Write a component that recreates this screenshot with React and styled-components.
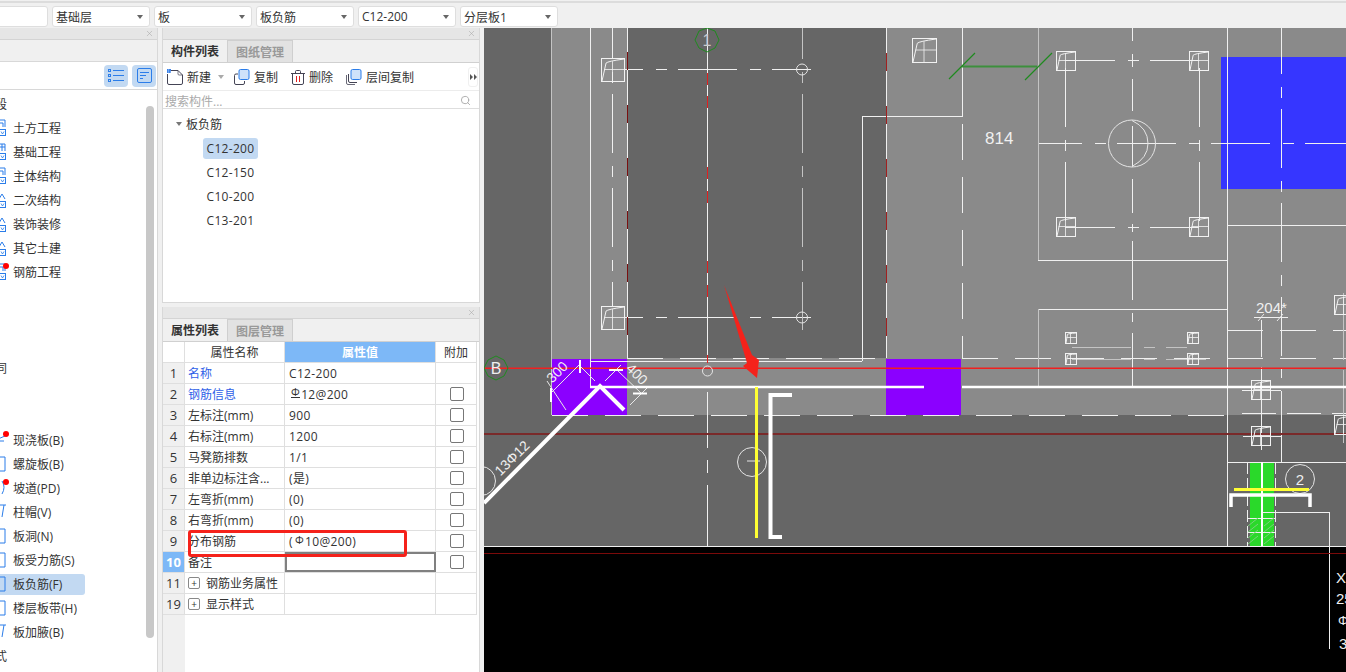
import styled, { createGlobalStyle } from "styled-components";
import { Search, X } from "lucide-react";

const GlobalStyle = createGlobalStyle`
  html, body { margin: 0; padding: 0; overflow: hidden; }
  * { box-sizing: border-box; }
  body { font-family: "Open Sans", "Noto Sans CJK SC", sans-serif; font-size: 12px; color: #333; }
`;

const Page = styled.div`
  width: 1346px;
  height: 672px;
  overflow: hidden;
  display: flex;
  flex-direction: column;
  background: #f0f0f0;
`;

const TopBar = styled.div`
  flex: none;
  display: flex;
  align-items: center;
  gap: 4px;
  margin-left: -50px;
  margin-top: 1px;
  padding-top: 2px;
  border-top: 2px solid #dcdcdc;
  height: 27px;
  width: 1396px;
`;

const SelectBox = styled.div`
  width: 98px;
  height: 21px;
  flex: none;
  display: flex;
  align-items: center;
  justify-content: space-between;
  padding: 0 6px 0 3px;
  background: #fff;
  border: 1px solid #dedede;
  border-radius: 3px;
`;

const Caret = styled.span`
  width: 0;
  height: 0;
  flex: none;
  margin-left: ${(p) => p.$left || "0"};
  border-left: 3px solid transparent;
  border-right: 3px solid transparent;
  border-top: 4px solid ${(p) => p.$color || "#666"};
`;

const Main = styled.div`
  flex: 1;
  min-height: 0;
  display: flex;
  gap: 4px;
`;

const LeftPanel = styled.div`
  width: 158px;
  flex: none;
  display: flex;
  flex-direction: column;
  background: #fff;
  border-right: 1px solid #d8d8d8;
  overflow: hidden;
`;

const PanelHeader = styled.div`
  height: 12px;
  flex: none;
  display: flex;
  align-items: center;
  justify-content: flex-end;
  padding-right: 3px;
  background: #e6e6e6;
  border-bottom: 1px solid #d4d4d4;
  color: #aaa;
`;

const LeftTabStrip = styled.div`
  height: 22px;
  flex: none;
  background: #f0f0f0;
  border-bottom: 1px solid #d8d8d8;
`;

const ViewBar = styled.div`
  height: 28px;
  flex: none;
  display: flex;
  align-items: center;
  justify-content: flex-end;
  gap: 4px;
  padding-right: 1px;
  border-bottom: 1px solid #d8d8d8;
`;

const ViewButton = styled.div`
  width: 24px;
  height: 22px;
  display: flex;
  align-items: center;
  justify-content: center;
  background: #c2d9f2;
  border-radius: 4px;
`;

const TreeArea = styled.div`
  flex: 1;
  min-height: 0;
  display: flex;
  justify-content: space-between;
  padding-top: 2px;
`;

const TreeList = styled.div`
  display: flex;
  flex-direction: column;
`;

const TreeRow = styled.div`
  height: 24px;
  width: 85px;
  flex: none;
  display: flex;
  align-items: center;
`;

const TreeLabel = styled.div`
  position: relative;
  width: 97px;
  height: 21px;
  flex: none;
  display: flex;
  align-items: center;
  gap: 7px;
  white-space: nowrap;
  border-radius: 0 3px 3px 0;
  background: ${(p) => (p.$selected ? "#c2d9f2" : "transparent")};
  margin-left: ${(p) => (p.$clipped ? "-5px" : "-12px")};
`;

const RedDot = styled.span`
  position: absolute;
  left: 15px;
  top: 1px;
  width: 6px;
  height: 6px;
  border-radius: 50%;
  background: #f00;
`;

const ScrollThumb = styled.div`
  width: 8px;
  height: 532px;
  flex: none;
  margin: 14px 3px 0 0;
  background: #c8c8c8;
  border-radius: 4px;
`;

const MiddleColumn = styled.div`
  width: 318px;
  flex: none;
  display: flex;
  flex-direction: column;
  gap: 4px;
`;

const Panel = styled.div`
  flex: ${(p) => (p.$grow ? "1" : "none")};
  height: ${(p) => p.$height || "auto"};
  min-height: 0;
  display: flex;
  flex-direction: column;
  background: #fff;
  border-left: 1px solid #d8d8d8;
  border-right: 1px solid #d8d8d8;
  border-bottom: ${(p) => (p.$grow ? "0" : "1px solid #d8d8d8")};
`;

const TabStrip = styled.div`
  height: 23px;
  flex: none;
  display: flex;
  background: #f0f0f0;
  border-bottom: 1px solid #d0d0d0;
`;

const Tab = styled.div`
  width: 65px;
  display: flex;
  align-items: center;
  justify-content: center;
  font-weight: 700;
  color: ${(p) => (p.$active ? "#333" : "#999")};
  background: ${(p) => (p.$active ? "#f0f0f0" : "#e2e2e2")};
  border-right: 1px solid #cfcfcf;
  border-top: ${(p) => (p.$active ? "0" : "1px solid #cfcfcf")};
`;

const ActionBar = styled.div`
  height: 28px;
  flex: none;
  display: flex;
  align-items: center;
  padding: 1px 0 0 4px;
  border-bottom: 1px solid #ececec;
`;

const Action = styled.div`
  display: flex;
  align-items: center;
  gap: 4px;
  margin-right: ${(p) => p.$right || "13px"};
  white-space: nowrap;
`;

const OverflowButton = styled.div`
  width: 10px;
  height: 20px;
  margin-left: auto;
  margin-right: 1px;
  display: flex;
  align-items: center;
  justify-content: center;
  border: 1px solid #f0f0f0;
  border-radius: 3px;
`;

const SearchRow = styled.div`
  height: 18px;
  flex: none;
  display: flex;
  align-items: center;
  justify-content: space-between;
  padding: 2px 8px 0 2px;
  color: #aaa;
  border-bottom: 1px solid #dedede;
`;

const ComponentTree = styled.div`
  padding-top: 3px;
`;

const GroupRow = styled.div`
  height: 24px;
  display: flex;
  align-items: center;
  gap: 4px;
  padding-left: 13px;
`;

const LeafRow = styled.div`
  height: 24px;
  display: flex;
  align-items: center;
  padding-left: 40px;
`;

const LeafLabel = styled.div`
  height: 21px;
  width: 55px;
  display: flex;
  align-items: center;
  justify-content: center;
  letter-spacing: 0.3px;
  border-radius: 3px;
  background: ${(p) => (p.$selected ? "#c2d9f2" : "transparent")};
`;

const TableWrap = styled.div`
  position: relative;
  flex: 1;
  min-height: 0;
  display: flex;
  flex-direction: column;
`;

const TableRow = styled.div`
  height: 21px;
  flex: none;
  width: 314px;
  display: grid;
  grid-template-columns: 22px 100px 151px 41px;
  border-bottom: 1px solid #dfdfdf;
`;

const Cell = styled.div`
  display: flex;
  align-items: center;
  gap: 6px;
  padding-left: 3px;
  white-space: nowrap;
  border-right: 1px solid #dfdfdf;
  color: ${(p) => (p.$link ? "#2f5fe8" : "#333")};
`;

const HeaderCell = styled.div`
  display: flex;
  align-items: center;
  justify-content: center;
  border-right: 1px solid #dfdfdf;
  font-weight: ${(p) => (p.$active ? 600 : 400)};
  color: ${(p) => (p.$active ? "#fff" : "#333")};
  background: ${(p) => (p.$active ? "#7db8f7" : "#fff")};
`;

const NumberCell = styled.div`
  display: flex;
  align-items: center;
  justify-content: center;
  font-size: 13px;
  font-weight: ${(p) => (p.$active ? 700 : 400)};
  color: ${(p) => (p.$active ? "#fff" : "#333")};
  background: ${(p) => (p.$active ? "#7db8f7" : "#f0f0f0")};
  border-right: 1px solid #dfdfdf;
`;

const ValueCell = styled(Cell)`
  letter-spacing: 0.35px;
  padding-left: 4px;
  gap: 0;
  border: ${(p) => (p.$editing ? "2px solid #808080" : undefined)};
`;

const CheckCell = styled.div`
  display: flex;
  align-items: center;
  justify-content: center;
  padding-left: 1px;
  border-right: 1px solid #dfdfdf;
`;

const CheckBox = styled.span`
  width: 14px;
  height: 14px;
  background: #fff;
  border: 1px solid #777;
  border-radius: 2px;
`;

const ExpandBox = styled.span`
  width: 12px;
  height: 12px;
  flex: none;
  display: flex;
  align-items: center;
  justify-content: center;
  font-size: 10px;
  line-height: 1;
  border: 1px solid #888;
  border-radius: 2px;
`;

const NumberFiller = styled.div`
  flex: 1;
  width: 22px;
  background: #f0f0f0;
`;

const RebarMark = styled.span`
  font-size: 11px;
  line-height: 1;
  margin: 0 1px 0 2px;
  position: relative;
  top: -2px;
  border-bottom: ${(p) => (p.$grade ? "1px solid #333" : "0")};
`;

const RedHighlight = styled.div`
  position: absolute;
  left: 25px;
  top: 188px;
  width: 219px;
  height: 27px;
  border: 3px solid #f5221b;
  border-radius: 3px;
  pointer-events: none;
`;

const Canvas = styled.div`
  width: 862px;
  flex: none;
  background: #000;
  overflow: hidden;
`;

const CadSvg = styled.svg`
  display: block;
`;

const CadText = styled.text`
  font-family: "Liberation Sans", sans-serif;
  fill: ${(p) => p.$fill || "#f0f0f0"};
`;

const selects = ["", "基础层", "板", "板负筋", "C12-200", "分层板1"];

const treeRows = [
  { label: "段", clipped: true },
  { label: "土方工程", icon: "a" },
  { label: "基础工程", icon: "b" },
  { label: "主体结构", icon: "a" },
  { label: "二次结构", icon: "c" },
  { label: "装饰装修", icon: "c" },
  { label: "其它土建", icon: "c" },
  { label: "钢筋工程", icon: "a", dot: true },
  {},
  {},
  {},
  { label: "同", clipped: true },
  {},
  {},
  { label: "现浇板(B)", icon: "d", dot: true },
  { label: "螺旋板(B)", icon: "e" },
  { label: "坡道(PD)", icon: "f", dot: true },
  { label: "柱帽(V)", icon: "g" },
  { label: "板洞(N)", icon: "e" },
  { label: "板受力筋(S)", icon: "e" },
  { label: "板负筋(F)", icon: "e", selected: true },
  { label: "楼层板带(H)", icon: "e" },
  { label: "板加腋(B)", icon: "g" },
  { label: "式", clipped: true },
];

const props = [
  { no: 1, name: "名称", value: "C12-200", link: true, noCheck: true },
  { no: 2, name: "钢筋信息", mark: "grade", value: "12@200", link: true },
  { no: 3, name: "左标注(mm)", value: "900" },
  { no: 4, name: "右标注(mm)", value: "1200" },
  { no: 5, name: "马凳筋排数", value: "1/1" },
  { no: 6, name: "非单边标注含...", value: "(是)" },
  { no: 7, name: "左弯折(mm)", value: "(0)" },
  { no: 8, name: "右弯折(mm)", value: "(0)" },
  { no: 9, name: "分布钢筋", before: "(", mark: "plain", value: "10@200)" },
  { no: 10, name: "备注", value: "", active: true },
  { no: 11, name: "钢筋业务属性", group: true, noCheck: true },
  { no: 19, name: "显示样式", group: true, noCheck: true },
];

function PanelClose() {
  return <X size={9} strokeWidth={1.5} />;
}

function TreeIcon({ kind }) {
  const top = {
    a: "M2 1H17V8M12 4H15V8M2 1V9",
    b: "M11 1H17V8M11 4H17M14 1V8",
    c: "M11 8L14 3L17 8",
    d: "M10 8L17 5M10 10H16",
    e: "M12 2H17V16H12",
    f: "M14 2Q18 8 14 15",
    g: "M10 2H18M16 2L14 14",
  }[kind];
  const withBadge = "abc".includes(kind);
  return (
    <svg width="18" height="18" viewBox="0 0 18 18" fill="none" stroke="#2b7de9" strokeWidth="1" style={{ flex: "none" }}>
      <path d={top} />
      {withBadge && <rect x="11.5" y="10.5" width="6" height="6" fill="#fff" />}
      {withBadge && <path d="M13 12.5L14.5 15L16 12.5" strokeWidth="0.8" />}
    </svg>
  );
}

function ListIcon() {
  return (
    <svg width="16" height="14" viewBox="0 0 16 14" fill="none" stroke="#2b7de9">
      <path d="M5 1.5H16M5 6.5H16M5 11.5H16" />
      <rect x="0.5" y="0.5" width="2" height="2" />
      <rect x="0.5" y="5.5" width="2" height="2" />
      <rect x="0.5" y="10.5" width="2" height="2" />
    </svg>
  );
}

function DetailIcon() {
  return (
    <svg width="15" height="15" viewBox="0 0 15 15" fill="none" stroke="#2b7de9">
      <rect x="0.5" y="0.5" width="14" height="14" rx="1.5" />
      <path d="M3 4.5H12M3 7.5H9M3 10.5H6" />
    </svg>
  );
}

function NewIcon() {
  return (
    <svg width="16" height="16" viewBox="0 0 16 16" fill="none" stroke="#445" style={{ flex: "none" }}>
      <path d="M4 1.5H11L15.5 6V14Q15.5 15.5 14 15.5H2Q0.5 15.5 0.5 14V5" />
      <path d="M11 1.5V5Q11 6 12 6H15.5" strokeWidth="0.7" />
      <rect x="0" y="0" width="4" height="4" fill="#3b82e8" stroke="none" />
      <path d="M1 1H2M3 3H4M1 3H2" stroke="#fff" strokeWidth="0.6" />
    </svg>
  );
}

function CopyIcon({ stacked }) {
  return (
    <svg width="16" height="16" viewBox="0 0 16 16" fill="none" stroke="#445" style={{ flex: "none" }}>
      {stacked && <path d="M0.5 6V14Q0.5 15.5 2 15.5H9" strokeWidth="0.8" />}
      <path d={stacked ? "M2.5 5V12Q2.5 13.5 4 13.5H11" : "M4 5H2Q0.5 5 0.5 6.5V14Q0.5 15.5 2 15.5H9Q10.5 15.5 10.5 14V12"} />
      <rect x="5" y="0.5" width="10" height="10" rx="1.5" fill="#cfe2fa" stroke="#2b7de9" />
    </svg>
  );
}

function TrashIcon() {
  return (
    <svg width="14" height="15" viewBox="0 0 14 15" fill="none" stroke="#445" style={{ flex: "none" }}>
      <path d="M0 3.5H14M4.5 3V1.5Q4.5 0.5 5.5 0.5H8.5Q9.5 0.5 9.5 1.5V3" />
      <path d="M1.5 3.5V13Q1.5 14.5 3 14.5H11Q12.5 14.5 12.5 13V3.5" />
      <path d="M5.5 6V12M8.5 6V12" stroke="#e02020" />
    </svg>
  );
}

function RebarColumn({ x, y, s, color = "#f2f2f2" }) {
  return (
    <g fill="none" stroke={color} strokeWidth="1">
      <rect x={x + 0.5} y={y + 0.5} width={s} height={s} fill="rgba(255,255,255,0.04)" />
      <path d={`M${x + 1} ${y + s}L${x + s * 0.22} ${y + s * 0.22}Q${x + s * 0.3} ${y + s * 0.14} ${x + s} ${y + 1}`} />
      <path d={`M${x + s * 0.5} ${y + s * 0.14}V${y + s}M${x + s * 0.14} ${y + s * 0.5}H${x + s}`} strokeWidth="0.8" />
    </g>
  );
}

// straight lines of the drawing: [x1, y1, x2, y2, dash, offset]
const CENTER = "59 13 11 11";
const BORDER = "36 17";

const whiteLines = [
  [590.5, 28, 590.5, 387],
  [627.5, 28, 627.5, 358],
  [707.5, 28, 707.5, 358],
  [886.5, 28, 886.5, 358],
  [962.5, 28, 962.5, 116],
  [862.5, 116, 962.5, 116],
  [862.5, 116, 862.5, 361],
  [590, 361.5, 862, 361.5],
  [962.5, 124, 962.5, 358, BORDER],
  [627, 358.5, 886, 358.5, BORDER],
  [962, 358.5, 1346, 358.5, BORDER],
  [552, 415.5, 1227, 415.5, BORDER],
  [707.5, 392, 707.5, 448],
  [707.5, 460, 707.5, 473],
  [707.5, 485, 707.5, 546],
  [624, 69.5, 811, 69.5, CENTER, 40],
  [624, 317.5, 811, 317.5, CENTER, 40],
  [612.5, 0, 612.5, 306, CENTER],
  [1038, 260.5, 1227, 260.5],
  [1038, 309.5, 1227, 309.5],
  [1227.5, 28, 1227.5, 546],
  [1227, 225.5, 1346, 225.5],
  [1227, 330.5, 1346, 330.5, BORDER],
  [1065, 60.5, 1199, 60.5, CENTER, 9],
  [1065, 227.5, 1199, 227.5, CENTER, 9],
  [1065.5, 60, 1065.5, 227, CENTER, 86],
  [1199.5, 60, 1199.5, 227, CENTER, 86],
  [1038, 143.5, 1346, 143.5, CENTER, 15],
  [1281.5, 15, 1281.5, 378, CENTER],
  [1132.5, 28, 1132.5, 41],
  [1132.5, 54, 1132.5, 67],
  [1132.5, 79, 1132.5, 111],
  [1132.5, 126, 1132.5, 167],
  [1132.5, 179, 1132.5, 213],
  [1132.5, 224, 1132.5, 232],
  [1132.5, 241, 1132.5, 300],
  [1132.5, 313, 1132.5, 322],
  [1132.5, 333, 1132.5, 387],
  [1261.5, 320, 1261.5, 357],
  [1261.5, 367, 1261.5, 450],
  [1281.5, 391, 1281.5, 462],
  [1242, 390.5, 1281, 390.5],
  [1243, 436.5, 1281, 436.5],
  [1242, 413.5, 1346, 413.5, "34 11"],
  [1227, 462.5, 1346, 462.5],
  [1262, 512.5, 1329.5, 512.5],
  [1329.5, 512, 1329.5, 649],
  [1247.5, 462, 1247.5, 546, "12 4"],
  [1275.5, 462, 1275.5, 546, "12 4"],
  [1247, 518.5, 1276, 518.5],
  [1247, 532.5, 1276, 532.5],
  [1254, 317.5, 1288, 317.5],
  [484, 546.5, 1346, 546.5],
];

const greyLines = [
  [551.5, 28, 551.5, 415],
  [802.5, 0, 802.5, 330, CENTER],
  [1038.5, 28, 1038.5, 260],
  [1038.5, 309, 1038.5, 387],
  [1072, 347.5, 1187, 347.5, CENTER, 0],
  [1072, 359.5, 1206, 359.5, CENTER, 0],
  [1343.5, 293, 1343.5, 360],
  [1343.5, 370, 1343.5, 443],
];

const columns = [
  [601, 58, 23], [601, 306, 23], [912, 38, 24],
  [1056, 51, 19], [1189, 51, 19], [1056, 217, 19], [1189, 217, 19],
  [1065, 332, 11], [1187, 332, 11], [1065, 353, 11], [1187, 353, 11],
  [1251, 380, 19], [1251, 426, 19], [1334, 415, 19], [1334, 295, 19],
];

const repeat = (start, step, count) => Array.from({ length: count }, (_, i) => start + step * i);

function Line({ l, stroke, width = 1 }) {
  const [x1, y1, x2, y2, dash, offset] = l;
  return <line x1={x1} y1={y1} x2={x2} y2={y2} stroke={stroke} strokeWidth={width} strokeDasharray={dash} strokeDashoffset={offset} />;
}

function Drawing() {
  return (
    <CadSvg width="862" height="644" viewBox="484 28 862 644">
      <rect x="484" y="28" width="862" height="519" fill="#666" />
      <rect x="552" y="28" width="75" height="387" fill="#8a8a8a" />
      <rect x="627" y="358" width="600" height="57" fill="#8a8a8a" />
      <rect x="886" y="28" width="460" height="330" fill="#8a8a8a" />
      <rect x="1227" y="358" width="119" height="57" fill="#8a8a8a" />
      <rect x="862" y="116" width="24" height="242" fill="#666" />
      <rect x="1221" y="57" width="125" height="132" fill="#3636ff" />
      <rect x="552" y="359" width="75" height="56" fill="#8b00ff" />
      <rect x="886" y="359" width="75" height="56" fill="#8b00ff" />
      <rect x="1250" y="462" width="24" height="84" fill="#2ad92a" />

      <g shapeRendering="crispEdges">
        {whiteLines.map((l, i) => <Line key={i} l={l} stroke="#f0f0f0" />)}
        {greyLines.map((l, i) => <Line key={i} l={l} stroke="#c4c4c4" width={l[0] === l[2] && (l[0] === 551.5 || l[0] === 1038.5) ? 1.5 : 1} />)}
        {repeat(52, 53, 6).map((y) => <rect key={y} x="627" y={y} width="1" height="18" fill="#7a1010" />)}
        {repeat(53, 53, 6).map((y) => <rect key={y} x="886" y={y} width="1" height="18" fill="#a02020" />)}
        {[73, 96, 167, 191, 261, 285].map((y) => <rect key={y} x="707" y={y} width="1" height="12" fill="#e02020" />)}
        <rect x="707" y="355" width="1" height="8" fill="#e02020" />
      </g>

      <g stroke="#7ad07a" strokeWidth="1">
        {repeat(519, 6, 4).map((y) => <line key={y} x1="1248" y1={y + 7} x2="1258" y2={y - 1} />)}
        {repeat(519, 6, 4).map((y) => <line key={y} x1="1264" y1={y + 7} x2="1274" y2={y - 1} />)}
      </g>

      <rect x="484" y="367.5" width="862" height="1.5" fill="#f02020" />
      <rect x="484" y="433" width="862" height="2" fill="#7a2a2a" />
      <rect x="484" y="553" width="862" height="1" fill="#7a0a0a" />

      {columns.map(([x, y, s]) => <RebarColumn key={`${x}-${y}`} x={x} y={y} s={s} />)}

      <g fill="none" stroke="#e4e4e4">
        <circle cx="802" cy="69.5" r="5.5" />
        <circle cx="802" cy="317.5" r="5.5" />
        <circle cx="707.5" cy="371" r="5" />
        <circle cx="1132" cy="143.5" r="23.5" />
        <path d="M1132 120.5Q1148 128 1148 143.5Q1148 158 1132 166.5" />
        <circle cx="752" cy="462" r="14.5" />
        <path d="M747 461H760" />
        <circle cx="481" cy="481" r="14.5" />
        <circle cx="1300" cy="479" r="14.5" />
      </g>

      <g stroke="#e8e8e8" strokeWidth="1">
        <line x1="552" y1="392" x2="579" y2="365" />
        <line x1="547" y1="381" x2="566" y2="410" />
        <line x1="579" y1="365" x2="595" y2="381" />
        <line x1="605" y1="381" x2="621" y2="365" />
        <line x1="617" y1="370" x2="641" y2="393" />
        <line x1="630" y1="405" x2="648" y2="387" />
        <line x1="1258" y1="321" x2="1264" y2="314" />
        <line x1="1277" y1="321" x2="1283" y2="314" />
      </g>
      <g stroke="#fff" strokeWidth="2">
        <line x1="580" y1="360" x2="580" y2="373" />
        <line x1="609" y1="370" x2="623" y2="370" />
        <line x1="551" y1="388" x2="551" y2="402" />
        <line x1="633" y1="393.5" x2="647" y2="393.5" />
      </g>

      <g stroke="#fff" fill="none">
        <path d="M590 387H924M962 387H1346" strokeWidth="2.5" />
        <path d="M484 503L600 386L624 410" strokeWidth="4" />
        <path d="M792 395H770.5V537H782" strokeWidth="4" />
        <path d="M1231 507V495H1310V507" strokeWidth="3.5" />
        <path d="M1262 462V546" strokeWidth="2" />
      </g>
      <line x1="756.5" y1="387" x2="756.5" y2="538" stroke="#ffff33" strokeWidth="3" />
      <line x1="1234" y1="489.5" x2="1309" y2="489.5" stroke="#ffff33" strokeWidth="3" />

      <g stroke="#1f8a1f" fill="none">
        <path d="M962 66.5H1037" strokeWidth="2" stroke="#3c8f3c" />
        <path d="M1025 80L1052 53M949 79L975 53" strokeWidth="1.2" />
        <polygon points="707,28 715,31 719,40 715,48 707,52 699,48 695,40 699,31" />
        <polygon points="496,356 504,360 508,368 504,376 496,380 488,376 484,368 488,360" />
      </g>

      <CadText x="707" y="46" fontSize="16" textAnchor="middle" $fill="#ccc">1</CadText>
      <CadText x="496" y="374" fontSize="16" textAnchor="middle">B</CadText>
      <CadText x="985" y="144" fontSize="17">814</CadText>
      <CadText x="1256" y="313" fontSize="15">204*</CadText>
      <CadText x="1300" y="485" fontSize="15" textAnchor="middle">2</CadText>
      <CadText x="557" y="377" fontSize="14" textAnchor="middle" transform="rotate(-45 557 372)">300</CadText>
      <CadText x="637" y="379" fontSize="14" textAnchor="middle" transform="rotate(45 637 374)">400</CadText>
      <CadText x="512" y="463" fontSize="14" textAnchor="middle" transform="rotate(-45 512 458)">13Φ12</CadText>
      <CadText x="1336" y="583" fontSize="15">XL</CadText>
      <CadText x="1336" y="604" fontSize="15">25</CadText>
      <CadText x="1338" y="625" fontSize="13">Φ</CadText>
      <CadText x="1339" y="649" fontSize="15">3</CadText>

      <polygon points="724,285 752,355 759,360 757,378 743,366 747,363" fill="#f5221b" />
    </CadSvg>
  );
}

function PropertyRow({ row }) {
  return (
    <TableRow>
      <NumberCell $active={row.active}>{row.no}</NumberCell>
      <Cell $link={row.link}>
        {row.group && <ExpandBox>+</ExpandBox>}
        {row.name}
      </Cell>
      <ValueCell $editing={row.active}>
        {row.before}
        {row.mark && <RebarMark $grade={row.mark === "grade"}>Φ</RebarMark>}
        {row.value}
      </ValueCell>
      <CheckCell>{!row.noCheck && <CheckBox />}</CheckCell>
    </TableRow>
  );
}

export default function App() {
  return (
    <Page>
      <GlobalStyle />
      <TopBar>
        {selects.map((s, i) => (
          <SelectBox key={i}>
            {s}
            <Caret />
          </SelectBox>
        ))}
      </TopBar>
      <Main>
        <LeftPanel>
          <PanelHeader><PanelClose /></PanelHeader>
          <LeftTabStrip />
          <ViewBar>
            <ViewButton><ListIcon /></ViewButton>
            <ViewButton><DetailIcon /></ViewButton>
          </ViewBar>
          <TreeArea>
            <TreeList>
              {treeRows.map((r, i) => (
                <TreeRow key={i}>
                  {r.label && (
                    <TreeLabel $selected={r.selected} $clipped={r.clipped}>
                      {r.icon && <TreeIcon kind={r.icon} />}
                      {r.label}
                      {r.dot && <RedDot />}
                    </TreeLabel>
                  )}
                </TreeRow>
              ))}
            </TreeList>
            <ScrollThumb />
          </TreeArea>
        </LeftPanel>
        <MiddleColumn>
          <Panel $height="275px">
            <PanelHeader><PanelClose /></PanelHeader>
            <TabStrip>
              <Tab $active>构件列表</Tab>
              <Tab>图纸管理</Tab>
            </TabStrip>
            <ActionBar>
              <Action $right="10px"><NewIcon />新建<Caret $color="#aaa" $left="3px" /></Action>
              <Action><CopyIcon />复制</Action>
              <Action><TrashIcon />删除</Action>
              <Action><CopyIcon stacked />层间复制</Action>
              <OverflowButton>
                <svg width="7" height="6" viewBox="0 0 7 6" fill="#555"><path d="M0 0L3 3L0 6ZM4 0L7 3L4 6Z" /></svg>
              </OverflowButton>
            </ActionBar>
            <SearchRow>
              搜索构件...
              <Search size={11} color="#aaa" />
            </SearchRow>
            <ComponentTree>
              <GroupRow><Caret $color="#777" />板负筋</GroupRow>
              <LeafRow><LeafLabel $selected>C12-200</LeafLabel></LeafRow>
              <LeafRow><LeafLabel>C12-150</LeafLabel></LeafRow>
              <LeafRow><LeafLabel>C10-200</LeafLabel></LeafRow>
              <LeafRow><LeafLabel>C13-201</LeafLabel></LeafRow>
            </ComponentTree>
          </Panel>
          <Panel $grow>
            <PanelHeader><PanelClose /></PanelHeader>
            <TabStrip>
              <Tab $active>属性列表</Tab>
              <Tab>图层管理</Tab>
            </TabStrip>
            <TableWrap>
              <TableRow>
                <HeaderCell />
                <HeaderCell>属性名称</HeaderCell>
                <HeaderCell $active>属性值</HeaderCell>
                <HeaderCell>附加</HeaderCell>
              </TableRow>
              {props.map((row) => <PropertyRow key={row.no} row={row} />)}
              <NumberFiller />
              <RedHighlight />
            </TableWrap>
          </Panel>
        </MiddleColumn>
        <Canvas><Drawing /></Canvas>
      </Main>
    </Page>
  );
}
